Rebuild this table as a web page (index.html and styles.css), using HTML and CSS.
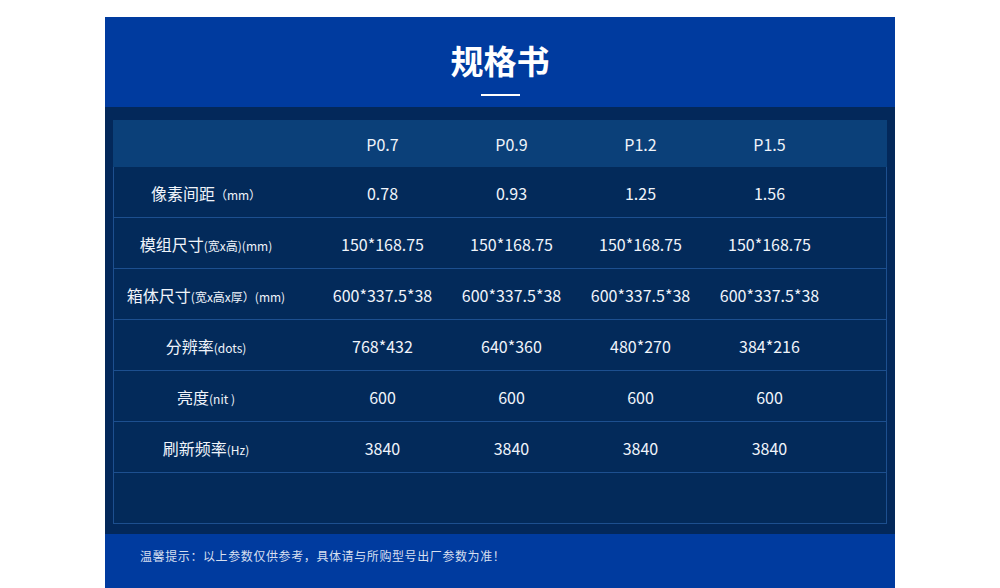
FILE: index.html
```html
<!DOCTYPE html>
<html lang="zh">
<head>
<meta charset="utf-8">
<title>规格书</title>
<link rel="stylesheet" href="styles.css">
</head>
<body>
<div class="page">
  <header class="hero">
    <h1 class="title">规格书</h1>
    <span class="underline"></span>
  </header>
  <section class="spec">
    <div class="table">
      <div class="row head">
        <div class="cell label"></div>
        <div class="cell">P0.7</div>
        <div class="cell">P0.9</div>
        <div class="cell">P1.2</div>
        <div class="cell">P1.5</div>
        <div class="cell"></div>
      </div>
      <div class="row">
        <div class="cell label">像素间距<small>（mm）</small></div>
        <div class="cell">0.78</div>
        <div class="cell">0.93</div>
        <div class="cell">1.25</div>
        <div class="cell">1.56</div>
        <div class="cell"></div>
      </div>
      <div class="row">
        <div class="cell label">模组尺寸<small>(宽x高)(mm)</small></div>
        <div class="cell">150*168.75</div>
        <div class="cell">150*168.75</div>
        <div class="cell">150*168.75</div>
        <div class="cell">150*168.75</div>
        <div class="cell"></div>
      </div>
      <div class="row">
        <div class="cell label">箱体尺寸<small>(宽x高x厚）(mm)</small></div>
        <div class="cell">600*337.5*38</div>
        <div class="cell">600*337.5*38</div>
        <div class="cell">600*337.5*38</div>
        <div class="cell">600*337.5*38</div>
        <div class="cell"></div>
      </div>
      <div class="row">
        <div class="cell label">分辨率<small>(dots)</small></div>
        <div class="cell">768*432</div>
        <div class="cell">640*360</div>
        <div class="cell">480*270</div>
        <div class="cell">384*216</div>
        <div class="cell"></div>
      </div>
      <div class="row">
        <div class="cell label">亮度<small>(nit )</small></div>
        <div class="cell">600</div>
        <div class="cell">600</div>
        <div class="cell">600</div>
        <div class="cell">600</div>
        <div class="cell"></div>
      </div>
      <div class="row">
        <div class="cell label">刷新频率<small>(Hz)</small></div>
        <div class="cell">3840</div>
        <div class="cell">3840</div>
        <div class="cell">3840</div>
        <div class="cell">3840</div>
        <div class="cell"></div>
      </div>
      <div class="row">
        <div class="cell label"></div>
        <div class="cell"></div>
        <div class="cell"></div>
        <div class="cell"></div>
        <div class="cell"></div>
        <div class="cell"></div>
      </div>
    </div>
  </section>
  <footer class="note">温馨提示：以上参数仅供参考，具体请与所购型号出厂参数为准！</footer>
</div>
</body>
</html>
```

FILE: styles.css
```css
html, body {
  margin: 0;
  padding: 0;
  background: #ffffff;
}

body {
  font-family: "Noto Sans CJK SC", "Noto Sans", sans-serif;
  color: #ffffff;
  overflow: hidden;
}

.page {
  width: 790px;
  margin: 17px auto 0;
}

.hero {
  height: 90px;
  background: #003b9f;
  display: flex;
  flex-direction: column;
  align-items: center;
  box-sizing: border-box;
  padding-top: 23px;
}

.title {
  margin: 0;
  font-size: 33px;
  line-height: 40px;
  font-weight: 700;
  color: #ffffff;
}

.underline {
  display: block;
  width: 39px;
  height: 2px;
  margin-top: 14px;
  background: #ffffff;
}

.spec {
  background: #03285a;
  padding: 13px 8px 10px;
}

.table {
  display: flex;
  flex-direction: column;
}

.row {
  display: grid;
  grid-template-columns: 204px repeat(4, 129px) 1fr;
  height: 50px;
  border-left: 1px solid #1d4f8f;
  border-right: 1px solid #1d4f8f;
  border-bottom: 1px solid #1d4f8f;
  background: #032a5a;
}

.row .cell {
  padding-top: 1px;
}

.row.head {
  height: 47px;
  background: #0b4079;
  border-color: #0b4079;
  border-bottom: 0;
}

.row.head .cell {
  padding-top: 0;
}

.cell {
  display: flex;
  align-items: center;
  justify-content: center;
  font-size: 16px;
  color: #f0f4fa;
  white-space: nowrap;
}

.cell.label {
  padding-right: 20px;
  align-items: baseline;
  align-content: center;
  flex-wrap: wrap;
}

.cell.label small {
  font-size: 12px;
}

.note {
  height: 54px;
  box-sizing: border-box;
  background: #003b9f;
  padding: 13px 0 0 35px;
  font-size: 12px;
  line-height: 18px;
  letter-spacing: 0.6px;
  color: #d6dff0;
}
```
